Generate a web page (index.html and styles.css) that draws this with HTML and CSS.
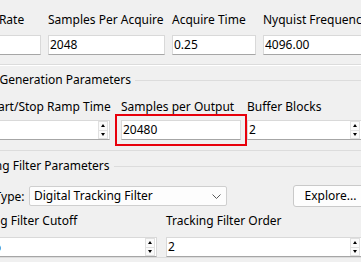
FILE: index.html
```html
<!DOCTYPE html>
<html>
<head>
<meta charset="utf-8">
<link rel="stylesheet" href="styles.css">
</head>
<body>
<div class="page">
  <div class="row r1">
    <div class="field"><span class="lbl">Sample Rate</span><div class="edit"><span class="val">8192</span></div></div>
    <div class="field"><span class="lbl">Samples Per Acquire</span><div class="edit"><span class="val">2048</span></div></div>
    <div class="field"><span class="lbl">Acquire Time</span><div class="edit"><span class="val">0.25</span></div></div>
    <div class="field"><span class="lbl">Nyquist Frequency</span><div class="edit"><span class="val">4096.00</span></div></div>
  </div>
  <div class="sep"></div>
  <section class="group g1">
    <div class="gtitle"><span class="gtext">Signal Generation Parameters</span><span class="gline"></span></div>
    <div class="row r2">
      <div class="field fa"><span class="lbl">Start/Stop Ramp Time</span>
        <div class="edit spin"><span class="val"></span><span class="btns"><span class="sb up"></span><span class="sb down"></span></span></div>
      </div>
      <div class="field fb"><span class="lbl">Samples per Output</span><div class="edit hl"><span class="val">20480</span></div></div>
      <div class="field fc"><span class="lbl">Buffer Blocks</span>
        <div class="edit spin"><span class="val">2</span><span class="btns"><span class="sb up"></span><span class="sb down"></span></span></div>
      </div>
    </div>
  </section>
  <section class="group g2">
    <div class="gtitle"><span class="gtext">Tracking Filter Parameters</span><span class="gline"></span></div>
    <div class="row r3">
      <span class="flbl">Filter Type:</span>
      <div class="combo"><span class="val">Digital Tracking Filter</span>
        <svg class="chev" width="9" height="5" viewBox="0 0 9 5"><polyline points="0.5,0.5 4.5,4.5 8.5,0.5" fill="none" stroke="#5a5a5a" stroke-width="1"/></svg>
      </div>
      <div class="btn">Explore...</div>
    </div>
    <div class="row r4">
      <div class="field"><span class="lbl">Tracking Filter Cutoff</span>
        <div class="edit spin"><span class="val cut">5 %</span><span class="btns"><span class="sb up"></span><span class="sb down"></span></span></div>
      </div>
      <div class="field"><span class="lbl">Tracking Filter Order</span>
        <div class="edit spin"><span class="val">2</span><span class="btns"><span class="sb up"></span><span class="sb down"></span></span></div>
      </div>
    </div>
  </section>
</div>
</body>
</html>
```

FILE: styles.css
```css
* { box-sizing: border-box; }
html, body { margin: 0; padding: 0; }
body {
  background: #f0f0f0;
  font-family: "Segoe UI", "Noto Sans", "Open Sans", sans-serif;
  font-size: 12px;
  color: #000;
  width: 361px;
  height: 262px;
  overflow: hidden;
}
.page { padding-top: 12px; width: 361px; }
.row { display: grid; }
.lbl { display: block; height: 16px; line-height: 16px; white-space: nowrap; }
.edit {
  display: flex;
  align-items: center;
  height: 20px;
  margin-top: 7px;
  background: #fff;
  border: 1px solid #d9d9d9;
  border-bottom-color: #a6a6a6;
  padding: 0 0 0 1px;
  white-space: nowrap;
  overflow: hidden;
}
.val { flex: 1; line-height: 18px; overflow: hidden; }

.r1 { grid-template-columns: 78px 117px 84px 120px; column-gap: 7px; margin-left: -37px; width: 440px; }
.r1 .field:first-child .lbl { margin-left: -9px; }

.sep { height: 2px; margin-top: 9px; border-top: 1px solid #dcdcdc; border-bottom: 1px solid #fff; }

.group { border-bottom: 1px solid #dcdcdc; }
.gtitle { display: flex; align-items: center; height: 16px; margin-top: 6px; margin-left: -38px; }
.gtext { white-space: nowrap; line-height: 16px; padding-right: 4px; }
.gline { flex: 1; height: 1px; background: #dcdcdc; }
.g1 { padding-bottom: 10px; }

.r2 { display: flex; margin-left: -13px; width: 420px; }
.r2 .fa { width: 123px; flex: none; }
.r2 .fb { width: 120px; flex: none; margin-left: 11px; }
.r2 .fc { width: 115px; flex: none; margin-left: 6px; }
.r2 .lbl { margin-top: 11px; }
.r2 .edit { margin-top: 5px; }

.spin { padding-right: 1px; }
.btns { display: flex; flex-direction: column; width: 10px; height: 18px; }
.sb { flex: 1; position: relative; border: 1px solid #e0e0e0; background: #fafafa; }
.sb.up { border-bottom: none; }
.sb::after { content: ""; position: absolute; left: 2px; border-left: 2.5px solid transparent; border-right: 2.5px solid transparent; }
.sb.up::after { top: 2px; border-bottom: 3px solid #000; }
.sb.down::after { top: 2px; border-top: 3px solid #000; }

.hl { outline: 2px solid #e8000b; outline-offset: 4px; }

.g2 .gtitle { margin-top: 7px; }
.r3 { display: flex; align-items: center; margin-top: 11px; height: 22px; margin-left: -37px; width: 420px; }
.flbl { width: 59px; text-align: right; white-space: nowrap; }
.combo {
  display: flex; align-items: center;
  margin-left: 7px;
  width: 198px; height: 20px;
  background: #fdfdfd;
  border: 1px solid #cfcfcf;
  border-radius: 2px;
  padding: 0 4px;
}
.combo .val { line-height: 18px; }
.chev { display: block; margin-right: 1px; }
.btn {
  margin-left: 66px;
  width: 75px; height: 22px;
  background: #fdfdfd;
  border: 1px solid #c9c9c9;
  border-radius: 3px;
  text-align: center;
  line-height: 20px;
}

.r4 { grid-template-columns: 197px 196px; column-gap: 9px; margin-left: -40px; width: 440px; }
.r4 .lbl { margin-top: 6px; }
.r4 .edit { margin-top: 8px; }
.cut { text-indent: 19px; }
```
